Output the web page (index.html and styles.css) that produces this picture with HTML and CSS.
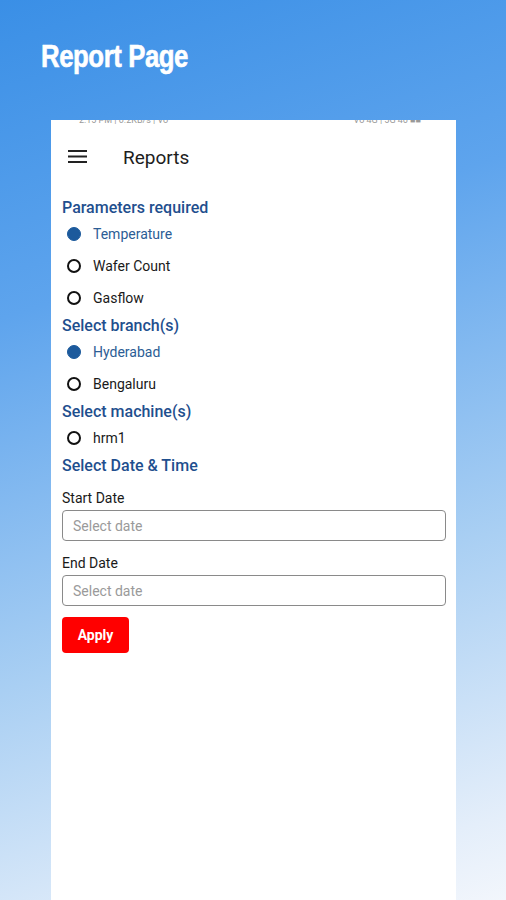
FILE: index.html
```html
<!DOCTYPE html>
<html>
<head>
<meta charset="utf-8">
<link rel="stylesheet" href="styles.css">
</head>
<body>
<div class="screen">
  <div class="page-head"><h1 class="page-title">Report Page</h1></div>
  <div class="phone">
    <div class="status">
      <span>2:15 PM | 0.2KB/s | Vo</span>
      <span>Vo 4G | 5G  46 ■■</span>
    </div>
    <div class="appbar">
      <svg class="menu" width="20" height="14" viewBox="0 0 20 14"><rect x="0" y="0" width="19" height="2" fill="#222"/><rect x="0" y="5.5" width="19" height="2" fill="#222"/><rect x="0" y="11" width="19" height="2" fill="#222"/></svg>
      <span class="appbar-title">Reports</span>
    </div>
    <div class="content">
      <div class="section-title">Parameters required</div>
      <div class="radio selected"><span class="dot"></span><span class="label">Temperature</span></div>
      <div class="radio"><span class="dot"></span><span class="label">Wafer Count</span></div>
      <div class="radio"><span class="dot"></span><span class="label">Gasflow</span></div>
      <div class="section-title">Select branch(s)</div>
      <div class="radio selected"><span class="dot"></span><span class="label">Hyderabad</span></div>
      <div class="radio"><span class="dot"></span><span class="label">Bengaluru</span></div>
      <div class="section-title">Select machine(s)</div>
      <div class="radio"><span class="dot"></span><span class="label">hrm1</span></div>
      <div class="section-title">Select Date &amp; Time</div>
      <div class="field-label first">Start Date</div>
      <div class="input">Select date</div>
      <div class="field-label">End Date</div>
      <div class="input">Select date</div>
      <button class="apply">Apply</button>
    </div>
  </div>
</div>
</body>
</html>
```
FILE: styles.css
```css
html, body {
  margin: 0;
  padding: 0;
}
body {
  width: 506px;
  height: 900px;
  overflow: hidden;
  font-family: Roboto, "Liberation Sans", sans-serif;
}
.screen {
  width: 506px;
  height: 900px;
  background: linear-gradient(162deg, #3a8fe6 0%, #5ea4ed 30%, #a9cff3 65%, #e4eefa 92%, #f2f6fc 100%);
  display: flex;
  flex-direction: column;
}
.page-head {
  height: 120px;
  padding-left: 41px;
}
.page-title {
  margin: 38px 0 0 0;
  display: inline-block;
  transform: scaleX(0.83);
  transform-origin: left center;
  font-family: "Liberation Sans", sans-serif;
  font-weight: 700;
  font-size: 31px;
  letter-spacing: -0.5px;
  color: #fff;
  line-height: 38px;
  -webkit-text-stroke: 0.6px #fff;
}
.phone {
  margin-left: 51px;
  width: 405px;
  flex: 1;
  background: #fff;
  display: flex;
  flex-direction: column;
}
.status {
  height: 4px;
  overflow: hidden;
  display: flex;
  justify-content: space-between;
  padding: 0 35px 0 28px;
  font-size: 9px;
  line-height: 0;
  color: #999;
}
.appbar {
  height: 70px;
  display: flex;
  align-items: center;
  padding-left: 17px;
  margin-top: -2px;
}
.menu {
  display: block;
}
.appbar-title {
  margin-left: 35px;
  font-size: 19px;
  color: #1d1d1d;
}
.content {
  padding: 4px 10px 0 11px;
  display: flex;
  flex-direction: column;
}
.section-title {
  font-size: 16px;
  font-weight: 500;
  color: #1f4f8e;
  line-height: 21px;
  height: 21px;
  padding-top: 1px;
}
.radio {
  height: 32px;
  display: flex;
  align-items: center;
}
.dot {
  width: 10px;
  height: 10px;
  border: 2px solid #111;
  border-radius: 50%;
  margin-left: 5px;
  flex: none;
}
.radio.selected .dot {
  background: #1c5a9c;
  border-color: #1c5a9c;
  width: 12px;
  height: 12px;
  border-width: 1px;
}
.label {
  margin-left: 12px;
  font-size: 14px;
  color: #1a1a1a;
}
.radio.selected .label {
  color: #2c5d95;
}
.field-label {
  margin-top: 13px;
  font-size: 14px;
  color: #1a1a1a;
  line-height: 18px;
}
.field-label.first {
  margin-top: 13px;
}
.input {
  margin-top: 3px;
  height: 29px;
  border: 1px solid #8a8a8a;
  border-radius: 4px;
  display: flex;
  align-items: center;
  padding-left: 10px;
  font-size: 14px;
  color: #9a9a9a;
}
.apply {
  margin-top: 11px;
  width: 67px;
  height: 36px;
  background: #ff0000;
  border: none;
  border-radius: 4px;
  color: #fff;
  font-family: Roboto, "Liberation Sans", sans-serif;
  font-weight: 700;
  font-size: 14px;
  padding: 0;
}
```
